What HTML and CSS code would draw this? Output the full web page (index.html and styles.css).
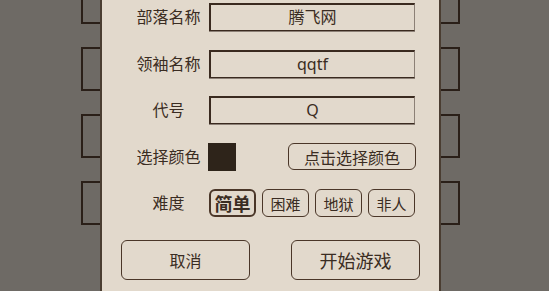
FILE: index.html
```html
<!DOCTYPE html>
<html lang="zh">
<head>
<meta charset="utf-8">
<link rel="stylesheet" href="styles.css">
</head>
<body>
<div class="scene">
  <div class="strip strip-left">
    <div class="slot"></div><div class="slot"></div><div class="slot"></div><div class="slot"></div>
  </div>
  <div class="panel">
    <div class="form">
      <div class="row">
        <div class="label">部落名称</div>
        <div class="field">腾飞网</div>
      </div>
      <div class="row">
        <div class="label">领袖名称</div>
        <div class="field">qqtf</div>
      </div>
      <div class="row">
        <div class="label">代号</div>
        <div class="field">Q</div>
      </div>
      <div class="row">
        <div class="label">选择颜色</div>
        <div class="swatch"></div>
        <div class="btn pick">点击选择颜色</div>
      </div>
      <div class="row">
        <div class="label">难度</div>
        <div class="levels">
          <div class="btn level selected">简单</div>
          <div class="btn level">困难</div>
          <div class="btn level">地狱</div>
          <div class="btn level">非人</div>
        </div>
      </div>
    </div>
    <div class="actions">
      <div class="btn action">取消</div>
      <div class="btn action start">开始游戏</div>
    </div>
  </div>
  <div class="strip strip-right">
    <div class="slot"></div><div class="slot"></div><div class="slot"></div><div class="slot"></div>
  </div>
</div>
</body>
</html>
```
FILE: styles.css
```css
html, body {
  margin: 0;
  padding: 0;
  width: 549px;
  height: 291px;
  overflow: hidden;
  background: #6e6a65;
  font-family: "Noto Sans", "Noto Sans CJK SC", sans-serif;
  color: #3a2c22;
}
.scene {
  display: flex;
  margin-left: 81px;
  height: 291px;
}
.strip {
  width: 19px;
  display: flex;
  flex-direction: column;
  gap: 23px;
  margin-top: -20px;
}
.slot {
  height: 40px;
  border: 2px solid #2a1f18;
  background: #6e6a65;
}
.strip-left .slot { border-right: none; }
.strip-right .slot { border-left: none; }
.panel {
  width: 337px;
  background: #e2d9cc;
  border-left: 2px solid #4a3d31;
  border-right: 2px solid #4a3d31;
  display: flex;
  flex-direction: column;
}
.form {
  display: flex;
  flex-direction: column;
  gap: 18.5px;
  padding-top: 3px;
  padding-left: 26px;
}
.row {
  display: flex;
  align-items: center;
  height: 28px;
}
.label {
  width: 81px;
  text-align: center;
  font-size: 16px;
  line-height: 28px;
}
.field {
  width: 203px;
  height: 25px;
  box-sizing: content-box;
  border-top: 2px solid #3a2a1f;
  border-left: 2px solid #3a2a1f;
  border-right: 1px solid #8c8076;
  border-bottom: 1px solid #3a2a1f;
  box-shadow: 0 1px 0 #8c8076;
  font-size: 16px;
  line-height: 25px;
  text-align: center;
}
.swatch {
  width: 28px;
  height: 28px;
  background: #2e241a;
  margin-left: -1px;
}
.btn {
  border: 1.5px solid #4a3628;
  border-radius: 6px;
  display: flex;
  align-items: center;
  justify-content: center;
  box-sizing: border-box;
}
.pick {
  width: 128px;
  height: 27px;
  margin-left: 52px;
  font-size: 16px;
}
.levels {
  display: flex;
  gap: 6px;
}
.level {
  width: 47px;
  height: 28px;
  font-size: 15px;
}
.level.selected {
  border-width: 2px;
  font-size: 18px;
  font-weight: bold;
}
.actions {
  display: flex;
  gap: 41px;
  padding-left: 19px;
  margin-top: 23px;
}
.action {
  width: 129px;
  height: 40px;
  font-size: 16px;
}
.action.start {
  font-size: 18px;
}
```
